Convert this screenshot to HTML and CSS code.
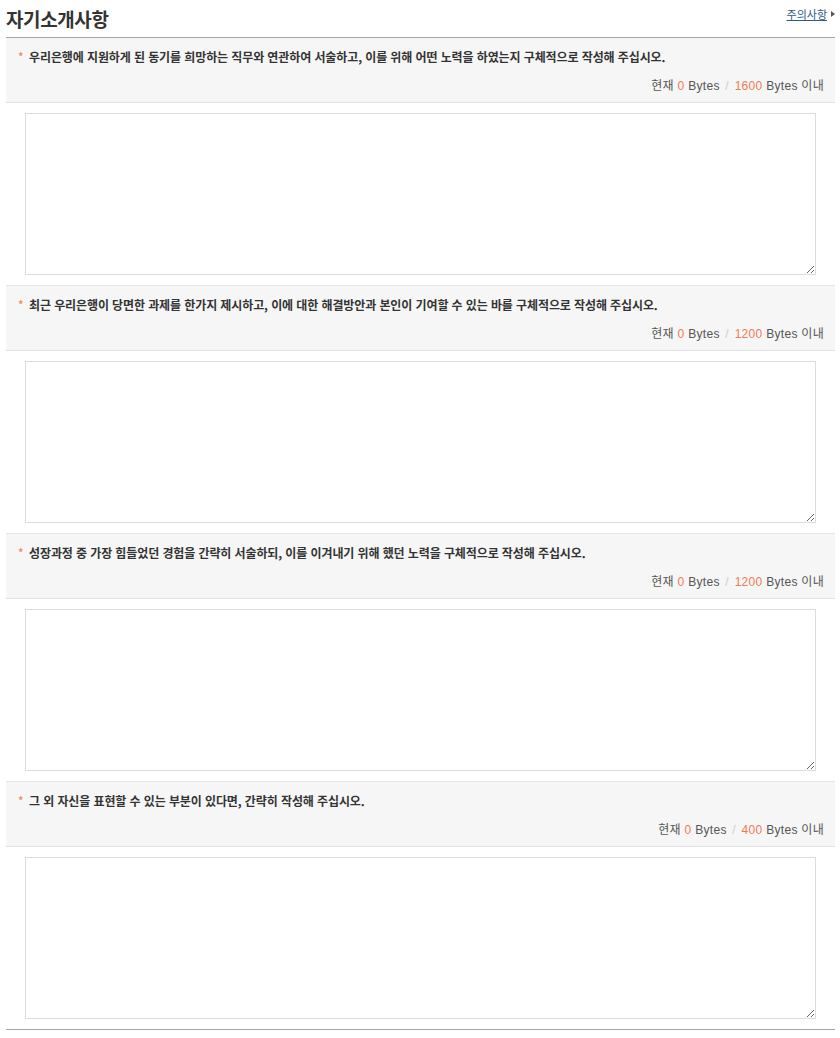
FILE: index.html
```html
<!DOCTYPE html>
<html lang="ko">
<head>
    <meta charset="UTF-8">
    <meta name="viewport" content="width=device-width, initial-scale=1.0">
    <title>자기소개사항</title>
    <link rel="stylesheet" href="styles.css">
</head>
<body>
    <div class="intro-wrap">
        <div class="intro-head">
            <h2 class="intro-title">자기소개사항</h2>
            <a href="#" class="intro-notice">주의사항</a>
        </div>

        <div class="intro-list">
            <div class="intro-item">
                <div class="q-box">
                    <p class="q-text"><span class="q-star">*</span>우리은행에 지원하게 된 동기를 희망하는 직무와 연관하여 서술하고, 이를 위해 어떤 노력을 하였는지 구체적으로 작성해 주십시오.</p>
                    <p class="q-bytes">현재 <em>0</em> Bytes <span class="q-sep">/</span> <em>1600</em> Bytes 이내</p>
                </div>
                <div class="a-box"><textarea class="a-text"></textarea></div>
            </div>
            <div class="intro-item">
                <div class="q-box">
                    <p class="q-text"><span class="q-star">*</span>최근 우리은행이 당면한 과제를 한가지 제시하고, 이에 대한 해결방안과 본인이 기여할 수 있는 바를 구체적으로 작성해 주십시오.</p>
                    <p class="q-bytes">현재 <em>0</em> Bytes <span class="q-sep">/</span> <em>1200</em> Bytes 이내</p>
                </div>
                <div class="a-box"><textarea class="a-text"></textarea></div>
            </div>
            <div class="intro-item">
                <div class="q-box">
                    <p class="q-text"><span class="q-star">*</span>성장과정 중 가장 힘들었던 경험을 간략히 서술하되, 이를 이겨내기 위해 했던 노력을 구체적으로 작성해 주십시오.</p>
                    <p class="q-bytes">현재 <em>0</em> Bytes <span class="q-sep">/</span> <em>1200</em> Bytes 이내</p>
                </div>
                <div class="a-box"><textarea class="a-text"></textarea></div>
            </div>
            <div class="intro-item">
                <div class="q-box">
                    <p class="q-text"><span class="q-star">*</span>그 외 자신을 표현할 수 있는 부분이 있다면, 간략히 작성해 주십시오.</p>
                    <p class="q-bytes">현재 <em>0</em> Bytes <span class="q-sep">/</span> <em>400</em> Bytes 이내</p>
                </div>
                <div class="a-box"><textarea class="a-text"></textarea></div>
            </div>
        </div>
    </div>
</body>
</html>
```

FILE: styles.css
```css
*{ padding: 0; margin: 0; box-sizing: border-box; }

body{
    font-family: "Noto Sans CJK KR", "Noto Sans", sans-serif;
    color: #333;
    background: #fff;
}

.intro-wrap{
    padding: 0 5px 0 6px;
}
.intro-head{
    display: flex;
    justify-content: space-between;
    align-items: flex-start;
    height: 38px;
    border-bottom: 1px solid #a5a5a5;
}
.intro-title{
    font-size: 19px;
    font-weight: bold;
    line-height: 24px;
    padding-top: 7px;
    letter-spacing: -0.4px;
    color: #333;
}
.intro-notice{
    font-size: 11px;
    line-height: 14px;
    margin-top: 7px;
    color: #2b5a8c;
    text-decoration: underline;
    padding-right: 8px;
    position: relative;
}
.intro-notice:after{
    content: "";
    position: absolute;
    right: 0;
    top: 4px;
    border-left: 4px solid #555;
    border-top: 3px solid transparent;
    border-bottom: 3px solid transparent;
}

.intro-list{
    border-bottom: 1px solid #a5a5a5;
}
.intro-item + .intro-item{
    border-top: 1px solid #e4e4e4;
}
.q-box{
    background: #f6f6f6;
    border-bottom: 1px solid #e0e0e0;
    padding: 10px 11px 8px 12px;
    height: 65px;
}
.q-text{
    font-size: 12px;
    font-weight: bold;
    line-height: 18px;
    color: #333;
    letter-spacing: -0.1px;
}
.q-star{
    color: #f07c4e;
    font-weight: normal;
    display: inline-block;
    width: 11px;
}
.q-bytes{
    margin-top: 12px;
    font-size: 12px;
    line-height: 16px;
    text-align: right;
    color: #555;
    letter-spacing: 0.3px;
    font-family: "Liberation Sans", "Noto Sans CJK KR", sans-serif;
}
.q-bytes em{
    font-style: normal;
    color: #ee7b52;
}
.q-sep{
    color: #ccc;
    margin: 0 2px;
}
.a-box{
    padding: 10px 19px;
}
.a-text{
    display: block;
    width: 100%;
    height: 162px;
    border: 1px solid #dcdcdc;
    background: #fff;
    resize: vertical;
}
```
